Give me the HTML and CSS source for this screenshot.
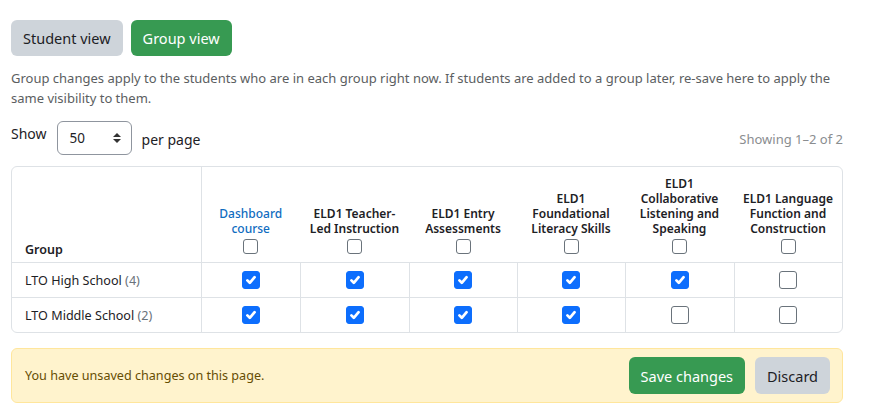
FILE: index.html
```html
<!DOCTYPE html>
<html>
<head>
<meta charset="utf-8">
<link rel="stylesheet" href="styles.css">
</head>
<body>
<div class="page">
  <div class="views">
    <button class="btn btn-secondary">Student view</button>
    <button class="btn btn-success">Group view</button>
  </div>
  <p class="note">Group changes apply to the students who are in each group right now. If students are added to a group later, re-save here to apply the same visibility to them.</p>
  <div class="toolbar">
    <div class="perpage">
      <span class="show">Show</span>
      <div class="select"><span>50</span>
        <svg class="caret" width="8" height="12" viewBox="0 0 8 12"><path d="M0 5 L4 1 L8 5 Z M0 7 L8 7 L4 11 Z" fill="#333"/></svg>
      </div>
      <span class="pp">per page</span>
    </div>
    <span class="count">Showing 1–2 of 2</span>
  </div>
  <div class="tablewrap">
    <table class="grid">
      <thead>
        <tr>
          <th class="gcol">Group</th>
          <th><a class="link">Dashboard course</a><span class="hbox"></span></th>
          <th><span>ELD1 Teacher-Led Instruction</span><span class="hbox"></span></th>
          <th><span>ELD1 Entry Assessments</span><span class="hbox"></span></th>
          <th><span>ELD1 Foundational Literacy Skills</span><span class="hbox"></span></th>
          <th><span>ELD1 Collaborative Listening and Speaking</span><span class="hbox"></span></th>
          <th><span>ELD1 Language Function and Construction</span><span class="hbox"></span></th>
        </tr>
      </thead>
      <tbody>
        <tr>
          <td class="gname">LTO High School <span class="num">(4)</span></td>
          <td><span class="cb on"></span></td>
          <td><span class="cb on"></span></td>
          <td><span class="cb on"></span></td>
          <td><span class="cb on"></span></td>
          <td><span class="cb on"></span></td>
          <td><span class="cb"></span></td>
        </tr>
        <tr>
          <td class="gname">LTO Middle School <span class="num">(2)</span></td>
          <td><span class="cb on"></span></td>
          <td><span class="cb on"></span></td>
          <td><span class="cb on"></span></td>
          <td><span class="cb on"></span></td>
          <td><span class="cb"></span></td>
          <td><span class="cb"></span></td>
        </tr>
      </tbody>
    </table>
  </div>
  <div class="alert">
    <span>You have unsaved changes on this page.</span>
    <div class="actions">
      <button class="btn btn-success">Save changes</button>
      <button class="btn btn-secondary">Discard</button>
    </div>
  </div>
</div>
</body>
</html>
```

FILE: styles.css
```css
* { box-sizing: border-box; }
body {
  margin: 0;
  font-family: "Noto Sans", "Open Sans", sans-serif;
  color: #1d2125;
  background: #fff;
}
.page {
  padding: 20px 28px 0 11px;
}
.views {
  display: flex;
  gap: 8px;
}
.btn {
  font-family: inherit;
  font-size: 14.5px;
  border: none;
  border-radius: 6px;
  height: 36px;
  padding: 0 12px;
  cursor: pointer;
}
.btn-secondary {
  background: #ced4da;
  color: #1d2125;
}
.btn-success {
  background: #379a52;
  color: #fff;
}
.note {
  margin: 12px 0 0;
  font-size: 13px;
  line-height: 20px;
  color: #5b5e61;
}
.toolbar {
  display: flex;
  justify-content: space-between;
  align-items: center;
  margin-top: 13px;
}
.perpage {
  display: flex;
  align-items: center;
  font-size: 14px;
}
.show {
  align-self: flex-start;
  margin-top: 3px;
}
.select {
  width: 75px;
  height: 34px;
  margin: 0 10px 0 10px;
  border: 1px solid #8f959e;
  border-radius: 6px;
  display: flex;
  align-items: center;
  justify-content: space-between;
  padding: 0 10px 0 12px;
  font-size: 13.5px;
}
.caret { display: block; }
.pp { margin-top: 2px; }
.count {
  font-size: 13px;
  color: #8a8d90;
  margin-top: 2px;
}
.tablewrap {
  margin-top: 11px;
  border: 1px solid #dee2e6;
  border-radius: 6px;
  overflow: hidden;
}
.grid {
  width: 100%;
  border-collapse: collapse;
  table-layout: fixed;
}
.grid th {
  height: 95px;
  vertical-align: bottom;
  font-size: 12px;
  font-weight: 600;
  line-height: 15px;
  text-align: center;
  padding: 0 6px 8px;
  color: #1d2125;
}
.grid th span, .grid th a { display: block; }
.grid th.gcol {
  width: 189px;
  text-align: left;
  padding-left: 13px;
  padding-bottom: 5px;
  border-right: 1px solid #dee2e6;
  font-size: 12.5px;
}
.grid th:nth-child(2) { width: 99px; }
.grid th:nth-child(3) { width: 109px; }
.grid th:nth-child(4) { width: 108px; }
.grid th:nth-child(5) { width: 108px; }
.grid th:nth-child(6) { width: 109px; }
.link { color: #0f6cbf; font-weight: 500; }
.hbox {
  width: 15px;
  height: 15px;
  border: 1px solid #6a737b;
  border-radius: 3px;
  margin: 3px auto 0;
}
.grid td {
  height: 35px;
  border-top: 1px solid #dee2e6;
  border-left: 1px solid #dee2e6;
  text-align: center;
  vertical-align: middle;
  padding: 0;
}
.grid td.gname {
  border-left: none;
  text-align: left;
  padding-left: 13px;
  padding-top: 2px;
  font-size: 12.6px;
  color: #1d2125;
}
.num { color: #6a737b; }
.cb {
  display: block;
  width: 18px;
  height: 18px;
  margin: 0 auto;
  border: 1px solid #6a737b;
  border-radius: 3px;
  background: #fff;
}
.cb.on {
  border-color: #0d6efd;
  background: #0d6efd url("data:image/svg+xml,%3Csvg xmlns='http://www.w3.org/2000/svg' viewBox='0 0 20 20'%3E%3Cpath fill='none' stroke='%23fff' stroke-linecap='round' stroke-linejoin='round' stroke-width='3.4' d='m5.5 10.5 3 3 6-7'/%3E%3C/svg%3E") center/100% no-repeat;
}
.alert {
  margin-top: 15px;
  height: 55px;
  background: #fff3cd;
  border: 1px solid #ffe69c;
  border-radius: 6px;
  display: flex;
  align-items: center;
  justify-content: space-between;
  padding: 0 12px 0 13px;
  font-size: 12.6px;
  color: #664d03;
}
.actions {
  display: flex;
  gap: 10px;
}
.actions .btn { height: 37px; }
```
